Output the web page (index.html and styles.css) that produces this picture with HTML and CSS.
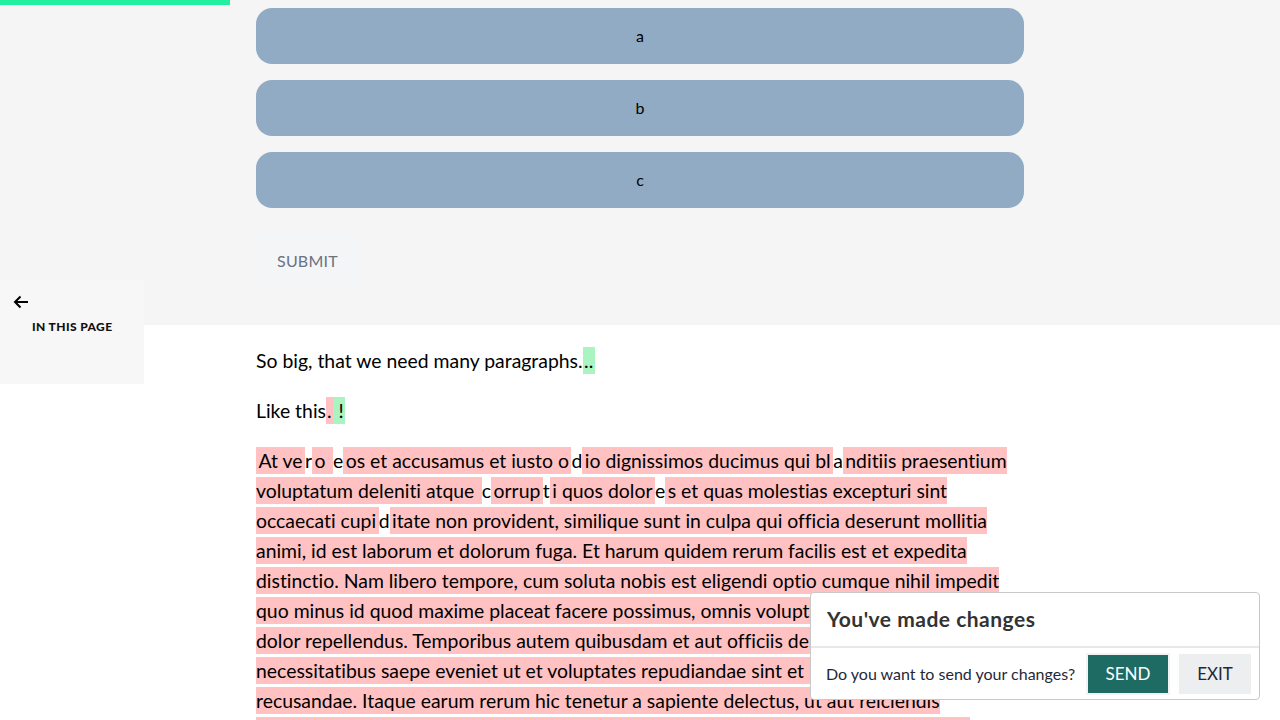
FILE: index.html
```html
<!DOCTYPE html>
<html lang="en">
<head>
<meta charset="utf-8">
<title>Quiz</title>
<link rel="stylesheet" href="styles.css">
</head>
<body>
<div class="progress"></div>
<section class="top">
  <div class="col">
    <div class="options">
      <button class="opt">a</button>
      <button class="opt">b</button>
      <button class="opt">c</button>
    </div>
    <button class="submit">SUBMIT</button>
  </div>
</section>
<aside class="toc">
  <svg class="arrow" width="16" height="14" viewBox="0 0 16 14"><path d="M15 7H2M7.5 1.5L2 7l5.5 5.5" fill="none" stroke="#000" stroke-width="2"/></svg>
  <div class="toc-title">IN THIS PAGE</div>
</aside>
<main class="col content">
  <p>So big, that we need many paragraphs.<span class="ins">..</span></p>
  <p>Like this<span class="del tight">.</span><span class="ins tight"> !</span></p>
  <p><span class="del">At ve</span>r<span class="del">o </span>e<span class="del">os et accusamus et iusto o</span>d<span class="del">io dignissimos ducimus qui bl</span>a<span class="del">nditiis praesentium voluptatum deleniti atque </span>c<span class="del">orrup</span>t<span class="del">i quos dolor</span>e<span class="del">s et quas molestias excepturi sint occaecati cupi</span>d<span class="del">itate non provident, similique sunt in culpa qui officia deserunt mollitia animi, id est laborum et dolorum fuga. Et harum quidem rerum facilis est et expedita distinctio. Nam libero tempore, cum soluta nobis est eligendi optio cumque nihil impedit quo minus id quod maxime placeat facere possimus, omnis voluptas assumenda est, omnis dolor repellendus. Temporibus autem quibusdam et aut officiis debitis aut rerum necessitatibus saepe eveniet ut et voluptates repudiandae sint et molestiae non recusandae. Itaque earum rerum hic tenetur a sapiente delectus, ut aut reiciendis voluptatibus maiores alias consequatur aut perferendis doloribus asperiores repellat.</span></p>
</main>
<div class="dialog">
  <div class="dlg-head">You've made changes</div>
  <div class="dlg-body">
    <span class="dlg-text">Do you want to send your changes?</span>
    <button class="btn-send">SEND</button>
    <button class="btn-exit">EXIT</button>
  </div>
</div>
</body>
</html>
```
FILE: styles.css
```css
html, body {
  margin: 0;
  padding: 0;
  background: #fff;
  font-family: Lato, "Liberation Sans", sans-serif;
  font-variant-ligatures: none;
  color: #000;
}
.progress {
  position: fixed;
  top: 0;
  left: 0;
  width: 230px;
  height: 5px;
  background: #22f0a0;
  z-index: 5;
}
.top {
  background: #f5f5f5;
  padding: 8px 0 36px;
}
.col {
  width: 768px;
  margin-left: 256px;
}
.options {
  display: flex;
  flex-direction: column;
  gap: 16px;
}
.opt {
  height: 56px;
  border: none;
  border-radius: 16px;
  background: #91abc5;
  font-family: Lato, sans-serif;
  font-size: 16px;
  line-height: 54px;
  color: #000;
  padding: 0;
}
.submit {
  display: block;
  margin-top: 25px;
  height: 56px;
  padding: 0 21px 2px;
  border: none;
  background: #f4f5f7;
  font-family: Lato, sans-serif;
  font-size: 16px;
  color: #6b7280;
  letter-spacing: 0.2px;
}
.toc {
  position: fixed;
  left: 0;
  top: 280px;
  width: 144px;
  height: 104px;
  background: #f7f7f7;
}
.arrow {
  display: block;
  margin: 15px 0 0 13px;
}
.toc-title {
  margin: 10px 0 0 32px;
  font-family: Lato, sans-serif;
  font-weight: 900;
  font-size: 12px;
  letter-spacing: 0.4px;
  color: #111;
}
.content {
  padding-top: 21px;
}
.content p {
  margin: 0 0 20px;
  font-size: 19.4px;
  line-height: 30px;
}
.del {
  background: #ffc1c1;
  padding: 2px 2.5px;
}
.ins {
  background: #aaf4c1;
  padding: 2px 1.5px;
}
.del.tight, .ins.tight {
  padding: 2px 1px;
}
.dialog {
  position: fixed;
  right: 20px;
  bottom: 20px;
  width: 448px;
  background: #fff;
  border: 1px solid #c8c8c8;
  border-radius: 4px;
}
.dlg-head {
  height: 53px;
  line-height: 52px;
  padding-left: 16px;
  font-family: Lato, sans-serif;
  font-weight: 700;
  font-size: 21px;
  letter-spacing: 0.5px;
  color: #333;
  border-bottom: 2px solid #e8e8e8;
}
.dlg-body {
  display: flex;
  align-items: center;
  height: 51px;
  padding: 0 8px 0 15px;
}
.dlg-text {
  flex: 1;
  font-size: 16px;
  color: #1f2937;
}
.btn-send {
  height: 38px;
  width: 80px;
  border: none;
  outline: 2px solid #f2f4f4;
  background: #1e6b63;
  color: #fff;
  font-family: Lato, sans-serif;
  font-size: 17px;
  padding: 0;
}
.btn-exit {
  margin-left: 11px;
  height: 40px;
  width: 72px;
  border: none;
  background: #eceef0;
  color: #1f2937;
  font-family: Lato, sans-serif;
  font-size: 17px;
  padding: 0;
}
```
